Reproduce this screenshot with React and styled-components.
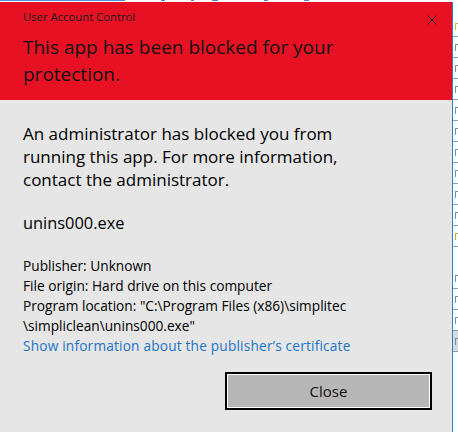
import styled, { createGlobalStyle } from 'styled-components';

const GlobalStyle = createGlobalStyle`
  html, body {
    margin: 0;
    padding: 0;
    background: #ffffff;
    overflow: hidden;
  }
  body {
    font-family: "Open Sans", "Noto Sans", sans-serif;
  }
`;

const Screen = styled.div`
  width: 458px;
  height: 432px;
  display: flex;
  flex-direction: column;
  overflow: hidden;
`;

const TopStrip = styled.div`
  height: 2px;
  flex: none;
  display: flex;
  gap: 6px;
`;

const TopTick = styled.span`
  display: block;
  height: 1px;
  width: ${p => p.w}px;
  margin-left: ${p => p.ml || 0}px;
  background: #4a90d9;
`;

const Desk = styled.div`
  flex: 1;
  display: flex;
  min-height: 0;
`;

const Dialog = styled.div`
  width: 452px;
  flex: none;
  display: flex;
  flex-direction: column;
  background: #e6e6e6;
  border-right: 1px solid #1f86d6;
`;

const Header = styled.div`
  background: #e81123;
  padding: 7px 0 12px 23px;
  position: relative;
`;

const Title = styled.div`
  font-size: 11.3px;
  line-height: 16px;
  color: #1a1a1a;
`;

const CloseX = styled.svg`
  position: absolute;
  top: 13px;
  right: 15px;
`;

const Heading = styled.div`
  margin-top: 9px;
  font-size: 19px;
  line-height: 27px;
  color: #111;
  white-space: nowrap;
`;

const Body = styled.div`
  padding: 22px 20px 0 23px;
  display: flex;
  flex-direction: column;
  color: #000;
`;

const Message = styled.div`
  font-size: 17px;
  line-height: 23px;
  white-space: nowrap;
`;

const FileName = styled.div`
  margin-top: 20px;
  font-size: 16.4px;
  line-height: 23px;
`;

const Details = styled.div`
  margin-top: 22px;
  font-size: 13.7px;
  line-height: 20px;
  white-space: nowrap;
`;

const Link = styled.a`
  color: #1c74c8;
  text-decoration: none;
  letter-spacing: 0.18px;
`;

const Footer = styled.div`
  display: flex;
  justify-content: flex-end;
  margin-top: 16px;
`;

const Button = styled.button`
  width: 207px;
  height: 38px;
  border: 2px solid #000;
  box-shadow: inset 0 0 0 1px #ffffff;
  background: #b7b7b7;
  font-family: "Open Sans", "Noto Sans", sans-serif;
  font-size: 15px;
  color: #111;
  padding: 0;
`;

const Side = styled.div`
  flex: 1;
  overflow: hidden;
  padding-top: 14px;
  display: flex;
  flex-direction: column;
`;

const SideRow = styled.div`
  height: 20px;
  flex: none;
  display: flex;
  align-items: center;
  padding-left: 2px;
  border-bottom: 1px solid ${p => (p.gap ? 'transparent' : '#9a9a9a')};
  background: ${p => (p.shade ? '#d9d9d9' : 'transparent')};
`;

const SideMark = styled.span`
  display: block;
  width: 3px;
  height: 6px;
  border-top: 1px solid ${p => p.c};
  border-left: 1px solid ${p => p.c};
`;

const sideRows = [
  { c: '#d9b040' }, { c: '#8a8a8a' }, { c: '#8a8a8a' }, { c: '#8a8a8a' },
  { c: '#8a8a8a' }, { c: '#8a8a8a' }, { c: '#8a8a8a' }, { c: '#8a8a8a' },
  { c: '#8a8a8a' }, { c: '#8a8a8a' }, { c: '#c9a050' }, { gap: true },
  { c: '#8a8a8a' }, { c: '#8a8a8a' }, { c: '#8a8a8a' }, { c: '#8a8a8a', shade: true },
];

export default function App() {
  return (
    <Screen>
      <GlobalStyle />
      <TopStrip>
        <TopTick w={125} />
        <TopTick w={4} ml={30} />
        <TopTick w={3} ml={20} />
        <TopTick w={6} ml={12} />
        <TopTick w={4} ml={40} />
        <TopTick w={5} ml={30} />
      </TopStrip>
      <Desk>
        <Dialog>
          <Header>
            <Title>User Account Control</Title>
            <CloseX width="10" height="10" viewBox="0 0 10 10">
              <path d="M0.5 0.5 L9.5 9.5 M9.5 0.5 L0.5 9.5" stroke="#2a2a2a" strokeWidth="1" fill="none" />
            </CloseX>
            <Heading>
              This app has been blocked for your
              <br />
              protection.
            </Heading>
          </Header>
          <Body>
            <Message>
              An administrator has blocked you from
              <br />
              running this app. For more information,
              <br />
              contact the administrator.
            </Message>
            <FileName>unins000.exe</FileName>
            <Details>
              Publisher: Unknown
              <br />
              File origin: Hard drive on this computer
              <br />
              Program location: "C:\Program Files (x86)\simplitec
              <br />
              \simpliclean\unins000.exe"
              <br />
              <Link href="#">Show information about the publisher’s certificate</Link>
            </Details>
            <Footer>
              <Button>Close</Button>
            </Footer>
          </Body>
        </Dialog>
        <Side>
          {sideRows.map((r, i) => (
            <SideRow key={i} gap={r.gap} shade={r.shade}>
              {!r.gap && <SideMark c={r.c} />}
            </SideRow>
          ))}
        </Side>
      </Desk>
    </Screen>
  );
}
